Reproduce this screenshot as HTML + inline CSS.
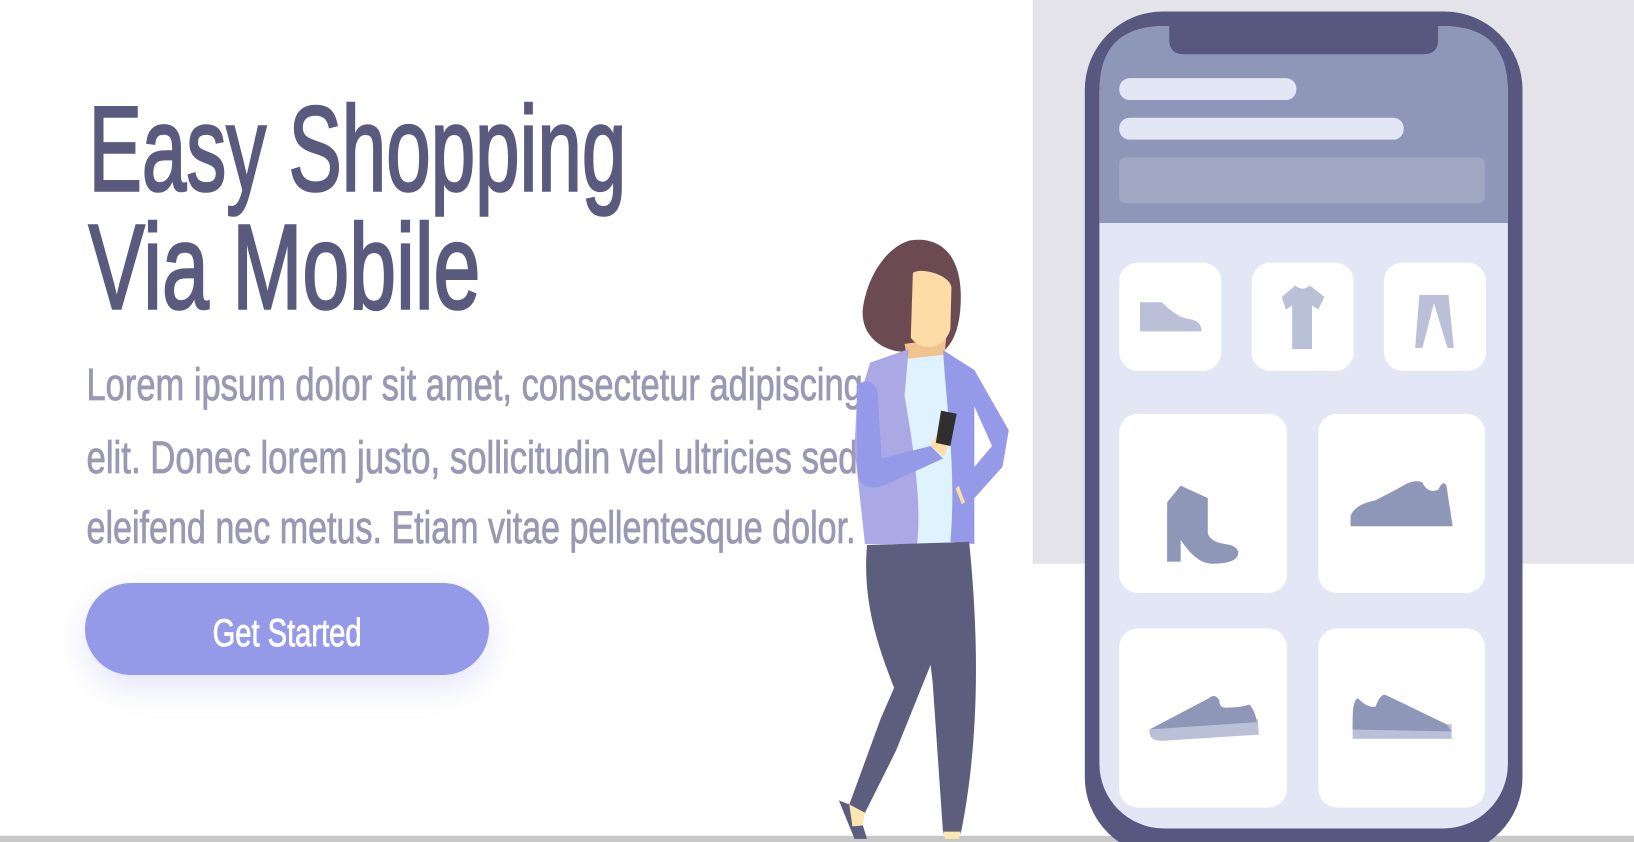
<!DOCTYPE html>
<html><head><meta charset="utf-8"><style>
html,body{margin:0;padding:0;background:#fff;width:1634px;height:842px;overflow:hidden}
.btn{position:absolute;left:85px;top:583px;width:404px;height:92px;border-radius:46px;background:#959ae8;box-shadow:0 12px 30px rgba(149,154,232,0.25)}
svg{position:absolute;left:0;top:0}
</style></head><body>
<div class="btn"></div>
<svg width="1634" height="842" viewBox="0 0 1568 808" preserveAspectRatio="none" font-family="'Liberation Sans Narrow','Liberation Sans',sans-serif">
<rect x="991" y="0" width="577" height="541" fill="#e4e3e9"/>
<rect x="0" y="802" width="1568" height="6" fill="#c8c8c8"/>
<!-- text -->
<text x="85" y="183" font-size="116" fill="#5a5a7e" stroke="#5a5a7e" stroke-width="2.5" textLength="516" lengthAdjust="spacingAndGlyphs">Easy Shopping</text>
<text x="85" y="296" font-size="116" fill="#5a5a7e" stroke="#5a5a7e" stroke-width="2.5" textLength="376" lengthAdjust="spacingAndGlyphs">Via Mobile</text>
<g fill="#9a98b3" stroke="#9a98b3" stroke-width="0.8" font-size="44">
<text x="83" y="384" textLength="745" lengthAdjust="spacingAndGlyphs">Lorem ipsum dolor sit amet, consectetur adipiscing</text>
<text x="83" y="454" textLength="740" lengthAdjust="spacingAndGlyphs">elit. Donec lorem justo, sollicitudin vel ultricies sed</text>
<text x="83" y="521" textLength="738" lengthAdjust="spacingAndGlyphs">eleifend nec metus. Etiam vitae pellentesque dolor.</text>
</g>
<text x="204" y="620" font-size="37" fill="#fff" stroke="#fff" stroke-width="0.8" textLength="143" lengthAdjust="spacingAndGlyphs">Get Started</text>
<!-- phone -->
<rect x="1041" y="11" width="420" height="810" rx="75" fill="#575780"/>
<rect x="1055" y="25" width="392" height="770" rx="62" fill="#e3e6f4"/>
<path d="M1055,214 L1055,87 Q1055,25 1117,25 L1385,25 Q1447,25 1447,87 L1447,214Z" fill="#8e97b8"/>
<path d="M1122,20 L1380,20 L1380,38 Q1380,52 1366,52 L1136,52 Q1122,52 1122,38Z" fill="#575780"/>
<rect x="1074" y="75" width="170" height="21" rx="10" fill="#e3e6f4"/>
<rect x="1074" y="113" width="273" height="21" rx="10" fill="#e3e6f4"/>
<rect x="1074" y="151" width="351" height="44" rx="6" fill="#a0a7c3"/>
<g fill="#fff">
<rect x="1074" y="252" width="98" height="104" rx="18"/>
<rect x="1201" y="252" width="98" height="104" rx="18"/>
<rect x="1328" y="252" width="98" height="104" rx="18"/>
<rect x="1074" y="397" width="161" height="172" rx="18"/>
<rect x="1265" y="397" width="160" height="172" rx="18"/>
<rect x="1074" y="603" width="161" height="172" rx="18"/>
<rect x="1265" y="603" width="160" height="172" rx="18"/>
</g>
<g fill="#bac0d8">
<path d="M1094,290 L1094,318 L1153,318 C1153,310 1148,307 1140,306 C1130,304 1122,297 1115,290Z"/>
<path d="M1230,285 L1243,274 Q1250,280 1257,274 L1271,285 L1265,297 L1259,293 L1259,335 L1240,335 L1240,293 L1234,297Z"/>
<path d="M1362,283 L1390,283 L1395,334 L1389,334 L1376,291 L1365,334 L1358,334Z"/>
<path d="M1103,700 Q1102,711 1115,711 L1208,705 L1207,690Z"/>
<path d="M1298,695 L1393,695 L1393,709 L1298,709Z"/>
</g>
<g fill="#8e97b8">
<path d="M1133,466 L1120,482 L1120,539 L1133,539 L1133,518 Q1147,540 1162,541 Q1190,541 1188,529 Q1186,523 1175,522 Q1162,520 1159,512 L1159,478Z"/>
<path d="M1296,505 L1296,495 Q1300,484 1320,480 Q1340,470 1350,464 Q1360,460 1365,463 Q1370,474 1380,470 Q1385,460 1388,466 L1394,505Z"/>
<path d="M1103,700 L1160,670 Q1166,665 1170,672 Q1170,680 1178,679 Q1190,679 1199,676 Q1205,683 1206,693 Z"/>
<path d="M1298,700 L1298,690 Q1298,672 1303,670 Q1313,680 1320,678 Q1325,665 1330,667 L1388,695 L1393,702Z"/>
</g>
<!-- woman -->
<path d="M872,231 C900,226 922,242 922,285 C922,318 912,336 898,341 L860,337 C838,332 826,316 828,296 C832,266 850,238 872,231Z" fill="#6b4a52"/>
<path d="M868,330 L872,350 L905,350 L908,325Z" fill="#f2c38e"/>
<path d="M876,262 C884,256 912,264 913,276 L912,316 C906,336 884,338 874,324 Z" fill="#fddca5"/>
<path d="M864,345 L910,340 L916,520 L876,522Z" fill="#def3fd"/>
<path d="M872,335 L835,348 L822,390 L820,430 L830,522 L880,522 C885,480 875,420 868,380Z" fill="#aaa9e6"/>
<path d="M905,336 L935,355 L968,413 L962,448 L935,478 L935,522 L912,520 C918,450 908,390 905,336Z" fill="#9499e8"/>
<path d="M935,390 L952,428 L935,448Z" fill="#fff"/>
<path d="M920,466 L926,482 L923,484 L917,469Z" fill="#fddca5"/>
<path d="M822,370 Q835,360 842,375 L846,440 L893,428 L905,440 L850,465 Q828,474 823,455Z" fill="#9499e8"/>
<path d="M893,428 L900,415 L912,420 L906,438Z" fill="#fddca5"/>
<path d="M903,394 L918,397 L912,428 L898,425Z" fill="#2f2f2f"/>
<path d="M832,523 L930,520 C938,600 942,700 922,800 L905,800 L895,655 L893,638 L860,720 L830,780 L815,772 L845,690 L858,660 C838,610 828,570 832,523Z" fill="#5d5d7e"/>
<path d="M815,772 L830,780 L828,792 L818,793Z" fill="#fce7b0"/>
<path d="M805,768 L815,772 L818,793 L828,792 L832,805 L820,805Z" fill="#5d5d7e"/>
<path d="M905,798 L922,798 L920,805 L907,805Z" fill="#fce7b0"/>
</svg>
</body></html>
